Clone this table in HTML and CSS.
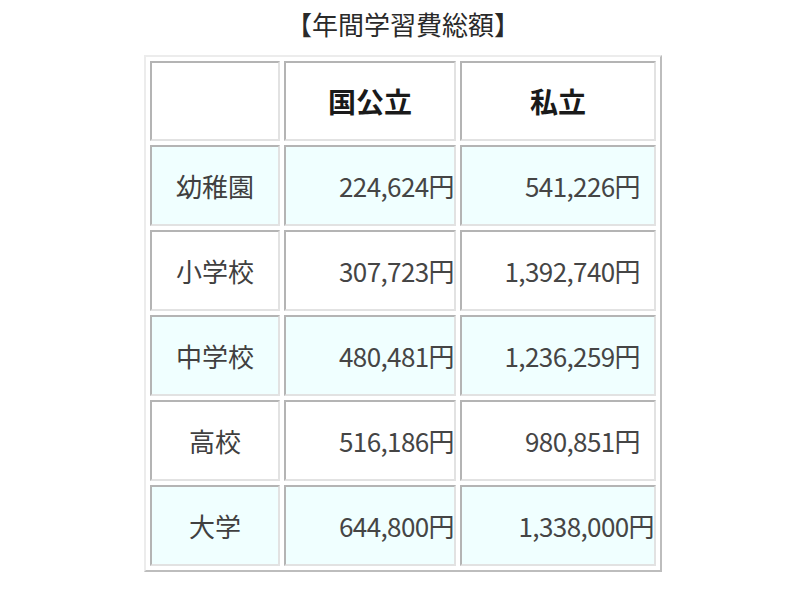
FILE: index.html
```html
<!DOCTYPE html>
<html lang="ja">
<head>
<meta charset="utf-8">
<title>年間学習費総額</title>
<link rel="stylesheet" href="styles.css">
</head>
<body>
<div class="page">
  <h1 class="title">【年間学習費総額】</h1>
  <table class="costs">
    <tr class="head">
      <th class="c1"></th>
      <th class="c2">国公立</th>
      <th class="c3">私立</th>
    </tr>
    <tr class="tint">
      <td class="label l-kinder">幼稚園</td>
      <td class="num">224,624円</td>
      <td class="num wide">541,226円</td>
    </tr>
    <tr>
      <td class="label l-elem">小学校</td>
      <td class="num">307,723円</td>
      <td class="num wide">1,392,740円</td>
    </tr>
    <tr class="tint">
      <td class="label l-junior">中学校</td>
      <td class="num">480,481円</td>
      <td class="num wide">1,236,259円</td>
    </tr>
    <tr>
      <td class="label l-high">高校</td>
      <td class="num">516,186円</td>
      <td class="num wide">980,851円</td>
    </tr>
    <tr class="tint">
      <td class="label l-univ">大学</td>
      <td class="num">644,800円</td>
      <td class="num">1,338,000円</td>
    </tr>
  </table>
</div>
</body>
</html>
```
FILE: styles.css
```css
html, body {
  margin: 0;
  padding: 0;
  background: #ffffff;
}

body {
  font-family: "Noto Sans CJK JP", "Noto Sans", sans-serif;
  color: #333333;
}

.page {
  display: flex;
  flex-direction: column;
  align-items: center;
  padding-left: 6px;
}

.title {
  margin: 0;
  height: 51px;
  line-height: 48px;
  font-size: 26px;
  font-weight: normal;
  color: #2a2a2a;
}

.costs {
  margin-top: 4px;
  border-collapse: separate;
  border-spacing: 4px;
  border-style: solid;
  border-width: 2px;
  border-color: #ececec #bdbdbd #bdbdbd #ececec;
}

.costs th,
.costs td {
  padding: 0;
  border-style: solid;
  border-width: 2px;
  border-color: #b4b4b4 #e2e2e2 #e2e2e2 #b4b4b4;
  vertical-align: middle;
  box-sizing: border-box;
}

.c1 { width: 130px; }
.c2 { width: 172px; }
.c3 { width: 196px; }

.head th {
  height: 80px;
  font-size: 28px;
  font-weight: bold;
  color: #1a1a1a;
  text-align: center;
}

.costs td {
  height: 81px;
  font-size: 26px;
}

.tint td {
  background: #f0ffff;
}

.label {
  text-align: center;
  color: #404040;
}

.l-kinder { padding-right: 14px; }
.l-elem { padding-left: 4px; }
.l-junior { padding-right: 10px; }
.l-high { padding-left: 6px; }
.l-univ { padding-right: 6px; }

.num {
  text-align: right;
  padding-right: 4px;
  color: #454545;
  letter-spacing: -0.6px;
}

.num.wide {
  padding-right: 14px;
}
```
